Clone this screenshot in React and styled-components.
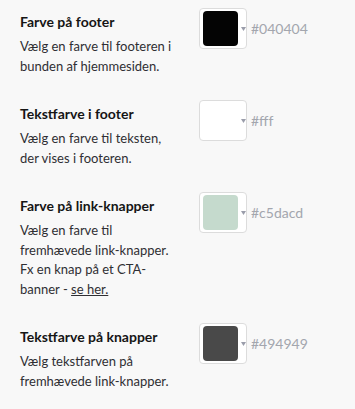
import React from "react";
import styled, { createGlobalStyle } from "styled-components";

const Global = createGlobalStyle`
  html, body { margin: 0; padding: 0; background: #f8f8f8; }
  body { font-family: Lato, "Open Sans", sans-serif; -webkit-font-smoothing: antialiased; }
`;

const List = styled.div`
  display: flex;
  flex-direction: column;
  gap: 24px;
  padding: 8px 0 0 20px;
`;

const Row = styled.div`
  display: flex;
  align-items: flex-start;
`;

const Info = styled.div`
  width: 154px;
  padding-top: 4px;
`;

const Title = styled.div`
  font-size: 14px;
  font-weight: 700;
  line-height: 20px;
  color: #151515;
`;

const Desc = styled.div`
  margin-top: 5px;
  font-size: 13px;
  line-height: 19.5px;
  color: #2f2f33;
  a { color: #2f2f33; text-decoration: underline; }
`;

const Control = styled.div`
  margin-left: 25px;
  display: flex;
  align-items: center;
`;

const SwatchBox = styled.div`
  box-sizing: border-box;
  width: 48px;
  height: 41px;
  padding: 3px 10px 3px 3px;
  border: 1px solid #dcdcdc;
  border-radius: 4px;
  background: #fff;
  display: flex;
  align-items: center;
  gap: 3px;
`;

const Swatch = styled.div`
  width: 35px;
  height: 35px;
  border-radius: 4px;
  flex: none;
  background: ${(p) => p.$color};
`;

const Caret = styled.svg`
  flex: none;
  width: 5px;
  height: 4px;
`;

const Hex = styled.span`
  margin-left: 4px;
  font-size: 14px;
  color: #a3a6ae;
`;

const items = [
  {
    title: "Farve på footer",
    desc: "Vælg en farve til footeren i bunden af hjemmesiden.",
    color: "#040404",
    hex: "#040404",
  },
  {
    title: "Tekstfarve i footer",
    desc: "Vælg en farve til teksten, der vises i footeren.",
    color: "#ffffff",
    hex: "#fff",
  },
  {
    title: "Farve på link-knapper",
    desc: (
      <>
        Vælg en farve til fremhævede link-knapper. Fx en knap på et CTA-banner -{" "}
        <a href="#">se her.</a>
      </>
    ),
    color: "#c5dacd",
    hex: "#c5dacd",
  },
  {
    title: "Tekstfarve på knapper",
    desc: "Vælg tekstfarven på fremhævede link-knapper.",
    color: "#494949",
    hex: "#494949",
  },
];

export default function App() {
  return (
    <>
      <Global />
      <List>
        {items.map((it) => (
          <Row key={it.title}>
            <Info>
              <Title>{it.title}</Title>
              <Desc>{it.desc}</Desc>
            </Info>
            <Control>
              <SwatchBox>
                <Swatch $color={it.color} />
                <Caret viewBox="0 0 5 4">
                  <path d="M0 0 L5 0 L2.5 4 Z" fill="#9a9daa" />
                </Caret>
              </SwatchBox>
              <Hex>{it.hex}</Hex>
            </Control>
          </Row>
        ))}
      </List>
    </>
  );
}
